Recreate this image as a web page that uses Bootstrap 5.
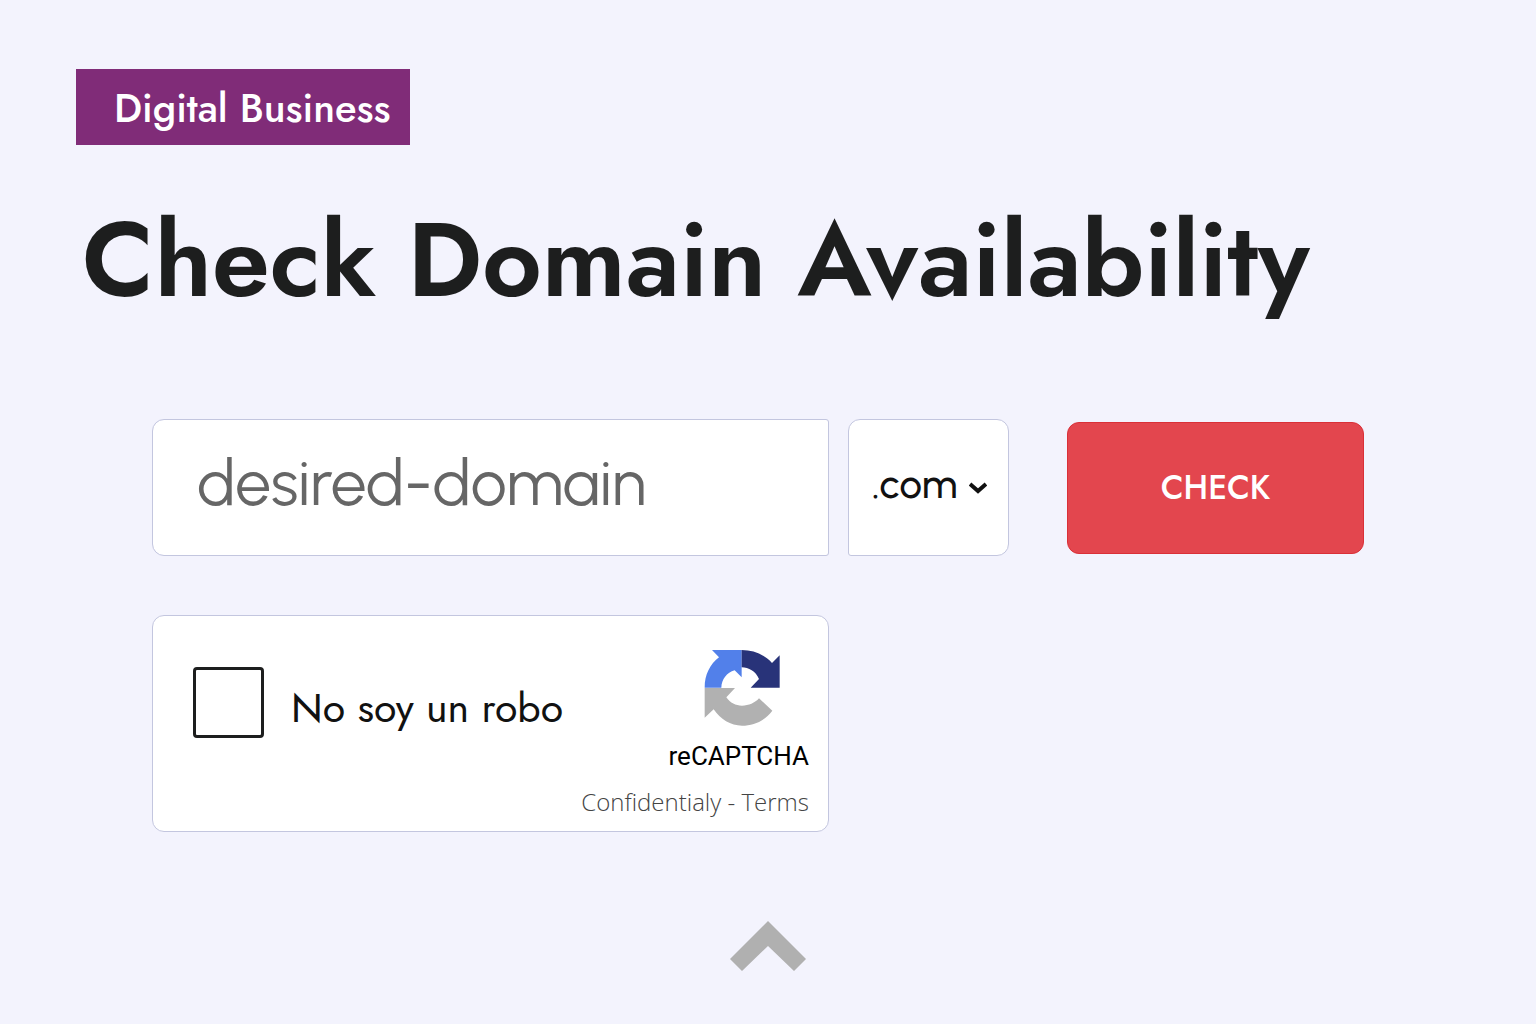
<!DOCTYPE html>
<html lang="en">
<head>
<meta charset="utf-8">
<meta name="viewport" content="width=device-width, initial-scale=1">
<title>Check Domain Availability</title>
<link href="https://cdn.jsdelivr.net/npm/bootstrap@5.3.0/dist/css/bootstrap.min.css" rel="stylesheet">
<style>
  body { background: #f3f3fd; color: #1d1e1e; font-family: Jost, Lato, "Open Sans", sans-serif; }
  .page { padding: 69px 76px 52px; }
  .tag { background: #802c78; color: #fff; font-size: 40px; line-height: 74px; font-weight: 500; padding: 2px 20px 0 38px; }
  .headline { font-size: 104px; line-height: 120px; font-weight: 600; margin: 55px 0 99px 6px; }
  .checker { display: grid; grid-template-columns: minmax(0, 1fr) 161px 336px; column-gap: 19px; row-gap: 59px; padding: 0 96px 0 76px; }
  .field { height: 137px; background-color: #fff; border: 1px solid #c3c6df; }
  .domain, .zone { font-family: Urbanist, Jost, Lato, sans-serif; }
  .domain { border-radius: 12px 3px 3px 12px; color: #666; font-size: 64px; font-weight: 400; padding: 0 44px 10px; }
  .domain:focus { color: #444; }
  .zone { border-radius: 12px 12px 12px 3px; appearance: none; background-image: none; color: #111; font-size: 40px; font-weight: 500; padding: 0 0 8px 23px; }
  .zone-arrow { right: 22px; top: 63px; pointer-events: none; }
  .go { height: 132px; margin-left: 39px; border-radius: 12px; background: #e3464e; border: 1px solid #da3038; color: #fff; font-size: 33px; font-weight: 500; }
  .go:hover { background: #cf3840; color: #fff; }
  .robot { height: auto; border-radius: 12px; padding: 33px 19px 12px 40px; }
  .tick { width: 71px; height: 71px; margin: 18px 27px 0 0; border: 3px solid #1d1e1e; border-radius: 6px; }
  .tick-label { font-size: 41px; line-height: 48px; color: #111; margin-top: 35px; }
  .brand-name { font-family: Roboto, sans-serif; font-size: 26px; line-height: 32px; color: #000; margin-top: 13px; }
  .legal { font-family: "Open Sans", sans-serif; font-size: 24px; line-height: 34px; font-weight: 300; margin-top: 13px; }
  .legal, .legal a { color: #444; text-decoration: none; }
  .to-top { margin-top: 88px; line-height: 0; }
</style>
</head>
<body>
<main class="page">
  <div class="tag d-inline-block">Digital Business</div>
  <h1 class="headline">Check Domain Availability</h1>

  <form class="checker align-items-center">
    <input class="field domain form-control" type="text" value="desired-domain" aria-label="Desired domain">
    <div class="position-relative">
      <select class="field zone form-select" aria-label="Domain extension"><option>.com</option><option>.net</option><option>.org</option></select>
      <svg class="zone-arrow position-absolute" width="18" height="12" viewBox="0 0 18 12" fill="none" stroke="#111" stroke-width="4"><path d="M1 2l8 7 8-7"/></svg>
    </div>
    <button class="go btn" type="button">CHECK</button>

    <div class="field robot">
      <div class="d-flex justify-content-between align-items-start">
        <div class="d-flex align-items-start">
          <input class="tick form-check-input" type="checkbox" id="robot">
          <label class="tick-label" for="robot">No soy un robo</label>
        </div>
        <div class="d-flex flex-column align-items-center">
          <svg class="ms-2" width="77" height="78" viewBox="46 42 231 234" aria-hidden="true">
            <path fill="#5280ea" d="M48 158C48 119 64 88 91 67L70 45H159V127L138 106C114 113 99 133 98 158Z"/>
            <path fill="#283379" d="M159 45C195 45 227 59 250 84L273 61V158H186L211 132C201 109 180 97 159 97Z"/>
            <path fill="#b1b1b1" d="M48 159H139L113 187C125 204 141 212 160 212C180 212 199 204 211 190L251 227C230 256 197 272 160 272C126 272 95 253 75 223L48 248Z"/>
          </svg>
          <div class="brand-name">reCAPTCHA</div>
        </div>
      </div>
      <div class="legal text-end"><a href="#">Confidentialy</a> - <a href="#">Terms</a></div>
    </div>
  </form>

  <div class="to-top text-center">
    <a href="#" aria-label="Back to top"><svg width="78" height="52" viewBox="0 0 78 52"><path fill="#b0b0b0" d="M39 1L77 39L65 51L39 26L13 51L1 39Z"/></svg></a>
  </div>
</main>
<script src="https://cdn.jsdelivr.net/npm/bootstrap@5.3.0/dist/js/bootstrap.bundle.min.js"></script>
</body>
</html>
